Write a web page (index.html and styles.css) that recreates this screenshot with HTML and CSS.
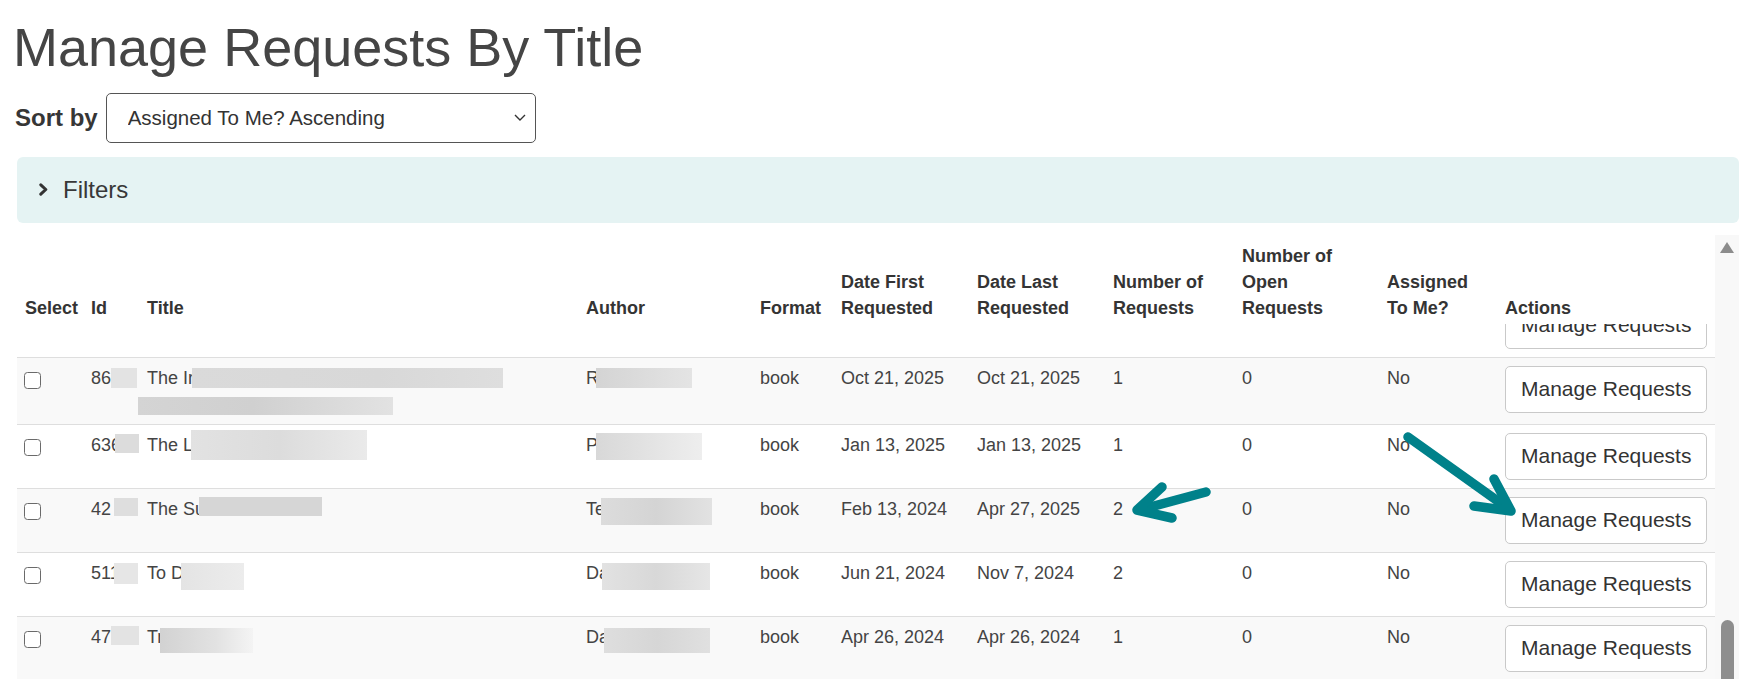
FILE: index.html
```html
<!DOCTYPE html>
<html lang="en">
<head>
<meta charset="utf-8">
<title>Manage Requests By Title</title>
<link rel="stylesheet" href="styles.css">
</head>
<body>
<div class="page">
  <h1 class="title">Manage Requests By Title</h1>

  <div class="sort-row">
    <label class="sort-label" for="sort">Sort by</label>
    <div class="select-wrap">
      <select id="sort" class="sort-select">
        <option>Assigned To Me? Ascending</option>
      </select>
      <svg class="select-chevron" viewBox="0 0 12 7" aria-hidden="true"><path d="M1 1l5 5 5-5"/></svg>
    </div>
  </div>

  <div class="filters">
    <svg class="filters-chevron" viewBox="0 0 9 13" aria-hidden="true"><path d="M1.8 1.8L6.8 6.5 1.8 11.2"/></svg>
    <span class="filters-label">Filters</span>
  </div>

  <div class="results">
    <table class="req-table">
      <colgroup>
        <col class="c-select"><col class="c-id"><col class="c-title"><col class="c-author"><col class="c-format">
        <col class="c-date"><col class="c-date"><col class="c-num"><col class="c-open"><col class="c-assigned"><col class="c-actions">
      </colgroup>
      <thead>
        <tr>
          <th>Select</th><th>Id</th><th>Title</th><th>Author</th><th>Format</th>
          <th>Date First Requested</th><th>Date Last Requested</th><th>Number of Requests</th>
          <th>Number of Open Requests</th><th>Assigned To Me?</th><th>Actions</th>
        </tr>
      </thead>
      <tbody>
        <tr class="partial">
          <td></td><td></td><td></td><td></td><td></td><td></td><td></td><td></td><td></td><td></td>
          <td><div class="clip"><button class="btn-manage" type="button">Manage Requests</button></div></td>
        </tr>
        <tr class="striped">
          <td><input class="check" type="checkbox"></td>
          <td>86<span class="rd rd-id1"></span></td>
          <td>The Ir<span class="rd rd-t1"></span><br><span class="rd rd-t1b"></span></td>
          <td>R<span class="rd rd-a1"></span></td>
          <td>book</td><td>Oct 21, 2025</td><td>Oct 21, 2025</td><td>1</td><td>0</td><td>No</td>
          <td><button class="btn-manage" type="button">Manage Requests</button></td>
        </tr>
        <tr>
          <td><input class="check" type="checkbox"></td>
          <td>636<span class="rd rd-id2"></span></td>
          <td>The L<span class="rd rd-t2"></span></td>
          <td>P<span class="rd rd-a2"></span></td>
          <td>book</td><td>Jan 13, 2025</td><td>Jan 13, 2025</td><td>1</td><td>0</td><td>No</td>
          <td><button class="btn-manage" type="button">Manage Requests</button></td>
        </tr>
        <tr class="striped">
          <td><input class="check" type="checkbox"></td>
          <td>42<span class="rd rd-id3"></span></td>
          <td>The Su<span class="rd rd-t3"></span></td>
          <td>Te<span class="rd rd-a3"></span></td>
          <td>book</td><td>Feb 13, 2024</td><td>Apr 27, 2025</td><td>2</td><td>0</td><td>No</td>
          <td><button class="btn-manage" type="button">Manage Requests</button></td>
        </tr>
        <tr>
          <td><input class="check" type="checkbox"></td>
          <td>511<span class="rd rd-id4"></span></td>
          <td>To D<span class="rd rd-t4"></span></td>
          <td>Da<span class="rd rd-a4"></span></td>
          <td>book</td><td>Jun 21, 2024</td><td>Nov 7, 2024</td><td>2</td><td>0</td><td>No</td>
          <td><button class="btn-manage" type="button">Manage Requests</button></td>
        </tr>
        <tr class="striped">
          <td><input class="check" type="checkbox"></td>
          <td>47<span class="rd rd-id5"></span></td>
          <td>Tr<span class="rd rd-t5"></span></td>
          <td>Da<span class="rd rd-a5"></span></td>
          <td>book</td><td>Apr 26, 2024</td><td>Apr 26, 2024</td><td>1</td><td>0</td><td>No</td>
          <td><button class="btn-manage" type="button">Manage Requests</button></td>
        </tr>
      </tbody>
    </table>
    <div class="vscroll" aria-hidden="true">
      <div class="vscroll-up"></div>
      <div class="vscroll-thumb"></div>
    </div>
  </div>

  <svg class="annotations" viewBox="0 0 1759 679" aria-hidden="true">
    <path d="M1206 492L1139 510"/>
    <path d="M1162 487L1137 510 1172 518"/>
    <path d="M1408 437L1509 509"/>
    <path d="M1494 479L1511 511 1474 506"/>
  </svg>
</div>
</body>
</html>
```

FILE: styles.css
```css
* { box-sizing: border-box; }

html, body {
  margin: 0;
  background: #fff;
}

body {
  font-family: "Liberation Sans", Arial, sans-serif;
  color: #444;
  overflow: hidden;
}

.page {
  position: relative;
  padding: 15px 20px 0 17px;
  min-height: 679px;
}

.title {
  margin: 0 0 0 -4px;
  font-size: 54px;
  font-weight: 400;
  line-height: 1.2;
  color: #454545;
}

/* sort */
.sort-row {
  display: flex;
  align-items: center;
  gap: 8px;
  margin-top: 13px;
}

.sort-label {
  margin-left: -2px;
  font-size: 24px;
  font-weight: 700;
  color: #363636;
}

.select-wrap {
  position: relative;
}

.sort-select {
  appearance: none;
  -webkit-appearance: none;
  display: block;
  width: 430px;
  height: 50px;
  padding: 0 40px 0 21px;
  border: 1px solid #555;
  border-radius: 5px;
  background: #fff;
  font-family: "Liberation Sans", Arial, sans-serif;
  font-size: 20.5px;
  color: #333;
}

.select-chevron {
  position: absolute;
  right: 10px;
  top: 21px;
  width: 12px;
  height: 7px;
  fill: none;
  stroke: #333;
  stroke-width: 1.4;
  pointer-events: none;
}

/* filters */
.filters {
  display: flex;
  align-items: center;
  gap: 15px;
  height: 66px;
  margin-top: 14px;
  padding-left: 22px;
  background: #e5f3f3;
  border-radius: 6px;
}

.filters-chevron {
  width: 9px;
  height: 13px;
  fill: none;
  stroke: #333;
  stroke-width: 3;
  stroke-linecap: round;
  stroke-linejoin: round;
}

.filters-label {
  font-size: 24px;
  color: #383838;
}

/* results table */
.results {
  display: flex;
  align-items: stretch;
  margin-top: 12px;
}

.req-table {
  width: 1698px;
  flex: 0 0 1698px;
  table-layout: fixed;
  border-collapse: collapse;
  font-size: 18px;
  line-height: 25px;
}

.c-select { width: 66px; }
.c-id { width: 56px; }
.c-title { width: 439px; }
.c-author { width: 174px; }
.c-format { width: 81px; }
.c-date { width: 136px; }
.c-num { width: 129px; }
.c-open { width: 145px; }
.c-assigned { width: 118px; }
.c-actions { width: 218px; }

.req-table th {
  padding: 8px 8px 3px;
  text-align: left;
  vertical-align: bottom;
  font-weight: 700;
  line-height: 26px;
  color: #343434;
}

.req-table td {
  padding: 8px;
  vertical-align: top;
  color: #444;
  white-space: nowrap;
}

.req-table tbody tr {
  border-bottom: 1px solid #dedede;
}

.req-table tbody tr.striped {
  background: #f9f9f9;
}

.req-table tr.partial td {
  padding: 0 8px 8px;
}

.clip {
  height: 25px;
  overflow: hidden;
  display: flex;
  flex-direction: column;
  justify-content: flex-end;
}

.btn-manage {
  display: block;
  flex: none;
  margin: 0;
  padding: 7.5px 15px;
  border: 1px solid #c9c9c9;
  border-radius: 5px;
  background: #fff;
  font-family: "Liberation Sans", Arial, sans-serif;
  font-size: 21px;
  line-height: 30px;
  color: #333;
  white-space: nowrap;
}

.check {
  appearance: none;
  -webkit-appearance: none;
  display: block;
  width: 17px;
  height: 17px;
  margin: 6px 0 0 -1px;
  border: 1.5px solid #6a6a6a;
  border-radius: 3.5px;
  background: #fff;
}

/* redactions */
.rd {
  display: inline-block;
  vertical-align: top;
  margin-bottom: -12px;
  background: linear-gradient(90deg, #d6d6d6, #e6e6e6);
}

.rd-id1 { width: 26px; height: 20px; margin-top: 2px; margin-left: 0; background: #e3e3e3; }
.rd-id2 { width: 24px; height: 19px; margin-top: 1px; margin-left: -6px; background: #dcdcdc; }
.rd-id3 { width: 24px; height: 18px; margin-top: 1px; margin-left: 3px; background: #dedede; }
.rd-id4 { width: 24px; height: 21px; margin-top: 2px; margin-left: -6px; background: #e6e6e6; }
.rd-id5 { width: 28px; height: 19px; margin-top: 1px; margin-left: 0; background: #e3e3e3; }

.rd-t1 { width: 311px; height: 20px; margin-top: 2px; margin-left: -2px; background: linear-gradient(90deg, #dadada, #d8d8d8 60%, #dedede); }
.rd-t1b { width: 255px; height: 18px; margin-top: 6px; margin-left: -9px; background: linear-gradient(90deg, #d4d4d4, #d0d0d0 45%, #e2e2e2); }
.rd-t2 { width: 176px; height: 30px; margin-top: -3px; margin-left: -2px; background: linear-gradient(90deg, #e2e2e2, #dcdcdc 50%, #eaeaea); }
.rd-t3 { width: 123px; height: 19px; margin-top: 0; margin-left: -6px; background: #d6d6d6; }
.rd-t4 { width: 63px; height: 27px; margin-top: 2px; margin-left: -3px; background: linear-gradient(90deg, #e4e4e4, #ececec); }
.rd-t5 { width: 93px; height: 25px; margin-top: 3px; margin-left: -3px; background: linear-gradient(90deg, #d2d2d2, #e2e2e2 60%, #f4f4f4); }

.rd-a1 { width: 96px; height: 20px; margin-top: 2px; margin-left: -3px; background: linear-gradient(90deg, #d4d4d4, #e4e4e4); }
.rd-a2 { width: 106px; height: 27px; margin-top: 0; margin-left: -2px; background: linear-gradient(90deg, #d8d8d8, #eeeeee); }
.rd-a3 { width: 111px; height: 27px; margin-top: 1px; margin-left: -4px; background: linear-gradient(90deg, #dcdcdc, #d4d4d4 50%, #e2e2e2); }
.rd-a4 { width: 108px; height: 27px; margin-top: 2px; margin-left: -7px; background: linear-gradient(90deg, #e2e2e2, #d8d8d8 50%, #e6e6e6); }
.rd-a5 { width: 106px; height: 25px; margin-top: 3px; margin-left: -5px; background: linear-gradient(90deg, #dedede, #d6d6d6 50%, #e0e0e0); }

/* scrollbar column */
.vscroll {
  width: 24px;
  flex: 0 0 24px;
  display: flex;
  flex-direction: column;
  align-items: center;
  background: #f8f8f8;
}

.vscroll-up {
  width: 0;
  height: 0;
  margin-top: 7px;
  border-left: 7.5px solid transparent;
  border-right: 7.5px solid transparent;
  border-bottom: 11px solid #8c8c8c;
}

.vscroll-thumb {
  margin-top: auto;
  width: 13px;
  height: 61px;
  border-radius: 7px 7px 0 0;
  background: #8e8e8e;
}

/* annotation arrows */
.annotations {
  position: absolute;
  left: 0;
  top: 0;
  width: 1759px;
  height: 679px;
  pointer-events: none;
  fill: none;
  stroke: #00818a;
  stroke-width: 9.5;
  stroke-linecap: round;
  stroke-linejoin: round;
}
```
